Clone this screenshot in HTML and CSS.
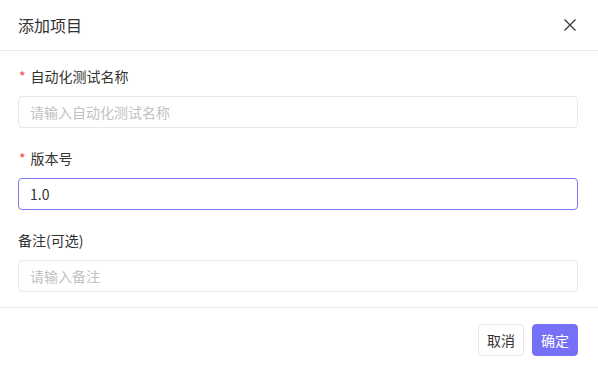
FILE: index.html
```html
<!DOCTYPE html>
<html lang="zh-CN">
<head>
    <meta charset="UTF-8">
    <meta name="viewport" content="width=device-width, initial-scale=1.0">
    <title>添加项目</title>
    <link rel="stylesheet" href="styles.css">
</head>
<body>
    <!-- Dialog -->
    <div class="dialog">
        <div class="dialog-header">
            <span class="dialog-title">添加项目</span>
            <span class="dialog-close">
                <svg width="12" height="12" viewBox="0 0 12 12"><path d="M0.5 0.5 L11.5 11.5 M11.5 0.5 L0.5 11.5" stroke="#333" stroke-width="1.2" fill="none"/></svg>
            </span>
        </div>

        <div class="dialog-body">
            <div class="form-item">
                <label class="form-label"><span class="required">*</span>自动化测试名称</label>
                <input class="form-input" type="text" placeholder="请输入自动化测试名称">
            </div>
            <div class="form-item">
                <label class="form-label"><span class="required">*</span>版本号</label>
                <input class="form-input focused" type="text" value="1.0">
            </div>
            <div class="form-item">
                <label class="form-label">备注(可选)</label>
                <input class="form-input" type="text" placeholder="请输入备注">
            </div>
        </div>

        <div class="dialog-footer">
            <button class="btn">取消</button>
            <button class="btn btn-primary">确定</button>
        </div>
    </div>
</body>
</html>
```

FILE: styles.css
```css
/* Basic page */
body {
    margin: 0;
    padding: 0;
    background-color: #fff;
    font-family: "Noto Sans CJK SC", "Liberation Sans", sans-serif;
    color: #333;
}
.dialog {
    width: 598px;
    height: 370px;
    box-sizing: border-box;
    display: flex;
    flex-direction: column;
}
/* Header */
.dialog-header {
    height: 50px;
    padding: 0 20px 0 18px;
    display: flex;
    align-items: center;
    justify-content: space-between;
    border-bottom: 1px solid #ebebeb;
}
.dialog-title {
    font-size: 16px;
    color: #333;
}
.dialog-close {
    display: flex;
    margin-right: 2px;
}
/* Form */
.dialog-body {
    padding: 15px 20px 15px 18px;
    border-bottom: 1px solid #ebebeb;
}
.form-item {
    margin-bottom: 20px;
}
.form-item:last-child {
    margin-bottom: 0;
}
.form-label {
    display: block;
    height: 20px;
    line-height: 20px;
    font-size: 14px;
    color: #333;
    margin-bottom: 10px;
}
.required {
    color: #f04747;
    margin-right: 5px;
    margin-left: 1px;
}
.form-input {
    display: block;
    width: 100%;
    height: 32px;
    box-sizing: border-box;
    border: 1px solid #e8e8e8;
    border-radius: 4px;
    padding: 0 11px;
    font-family: inherit;
    font-size: 14px;
    color: #333;
    outline: none;
}
.form-input::placeholder {
    color: #c2c2c2;
}
.form-input.focused {
    border-color: #7b77f4;
}
/* Footer */
.dialog-footer {
    padding: 16px 20px 0;
    display: flex;
    justify-content: flex-end;
    gap: 8px;
}
.btn {
    height: 32px;
    padding: 0 8px;
    font-family: inherit;
    font-size: 14px;
    color: #333;
    background-color: #fff;
    border: 1px solid #e8e8e8;
    border-radius: 4px;
}
.btn-primary {
    background-color: #7670f6;
    border-color: #7670f6;
    color: #fff;
}
```
